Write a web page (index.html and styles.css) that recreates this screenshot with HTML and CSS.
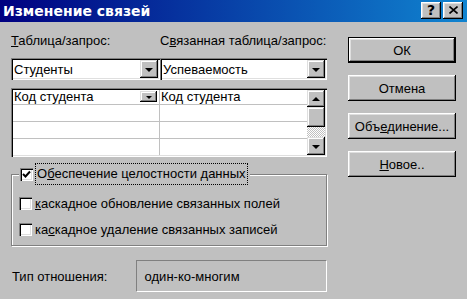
FILE: index.html
```html
<!DOCTYPE html>
<html lang="ru">
<head>
    <meta charset="UTF-8">
    <title>Изменение связей</title>
    <link rel="stylesheet" href="styles.css">
</head>
<body>
<div class="window">
    <div class="titlebar">
        <span class="title">Изменение связей</span>
        <div class="caption-btns">
            <div class="cap-btn help">?</div>
            <div class="cap-btn">
                <svg width="9" height="8" viewBox="0 0 9 8"><path d="M0.5 0.5 L8.5 7.5 M8.5 0.5 L0.5 7.5" stroke="#000" stroke-width="1.6"/></svg>
            </div>
        </div>
    </div>

    <div class="body">
        <div class="main">
            <div class="labels">
                <span><u>Т</u>аблица/запрос:</span>
                <span>С<u>в</u>язанная таблица/запрос:</span>
            </div>

            <div class="combos">
                <div class="combo">
                    <span class="combo-text">Студенты</span>
                    <div class="drop-btn"><i class="tri-down"></i></div>
                </div>
                <div class="combo">
                    <span class="combo-text">Успеваемость</span>
                    <div class="drop-btn"><i class="tri-down"></i></div>
                </div>
            </div>

            <div class="fields">
                <div class="rows">
                    <div class="row first">
                        <div class="cell">Код студента<div class="cell-btn"><i class="tri-down small"></i></div></div>
                        <div class="cell">Код студента</div>
                    </div>
                    <div class="row"><div class="cell"></div><div class="cell"></div></div>
                    <div class="row"><div class="cell"></div><div class="cell"></div></div>
                    <div class="row last"><div class="cell"></div><div class="cell"></div></div>
                </div>
                <div class="scrollbar">
                    <div class="sb-btn up"><i class="tri-up"></i></div>
                    <div class="sb-thumb"></div>
                    <div class="sb-track"></div>
                    <div class="sb-btn down"><i class="tri-down"></i></div>
                </div>
            </div>

            <div class="group">
                <div class="legend">
                    <span class="check"><svg width="9" height="9" viewBox="0 0 9 9"><path d="M1 4 L3.5 6.5 L8 1.5" fill="none" stroke="#000" stroke-width="2"/></svg></span>
                    <span class="focus">О<u>б</u>еспечение целостности данных</span>
                </div>
                <div class="option first">
                    <span class="check"></span>
                    <span><u>к</u>аскадное обновление связанных полей</span>
                </div>
                <div class="option">
                    <span class="check"></span>
                    <span>ка<u>с</u>кадное удаление связанных записей</span>
                </div>
            </div>

            <div class="reltype">
                <span class="reltype-label">Тип отношения:</span>
                <div class="reltype-box">один-ко-многим</div>
            </div>
        </div>

        <div class="side">
            <div class="btn default">ОК</div>
            <div class="btn">Отмена</div>
            <div class="btn">Объ<u>е</u>динение...</div>
            <div class="btn"><u>Н</u>овое..</div>
        </div>
    </div>
</div>
</body>
</html>
```

FILE: styles.css
```css
body {
    margin: 0;
    background: #c0c0c0;
    font-family: "Liberation Sans", Arial, sans-serif;
    font-size: 13px;
    color: #000;
}
.window {
    width: 467px;
    height: 299px;
    overflow: hidden;
}

/* title bar */
.titlebar {
    height: 22px;
    background: linear-gradient(to right, #000080, #1084d0);
    display: flex;
    align-items: center;
    justify-content: space-between;
    padding: 0 4px 0 3px;
}
.title {
    color: #fff;
    font: bold 14px "DejaVu Sans", sans-serif;
    margin-top: -1px;
}
.caption-btns {
    display: flex;
    gap: 2px;
    margin-top: -2px;
}
.cap-btn {
    width: 20px;
    height: 17px;
    background: #c0c0c0;
    box-shadow: inset -1px -1px #000, inset 1px 1px #fff, inset -2px -2px #808080, inset 2px 2px #dfdfdf;
    display: flex;
    align-items: center;
    justify-content: center;
}
.cap-btn.help {
    font: bold 14px "DejaVu Sans", sans-serif;
    line-height: 17px;
}

/* body */
.body {
    display: flex;
    padding-left: 11px;
}
.main {
    width: 316px;
}
.side {
    margin-left: 21px;
    padding-top: 15px;
    display: flex;
    flex-direction: column;
    gap: 12px;
}

.btn {
    width: 108px;
    height: 26px;
    box-sizing: border-box;
    background: #c0c0c0;
    box-shadow: inset -1px -1px #000, inset 1px 1px #fff, inset -2px -2px #808080, inset 2px 2px #dfdfdf;
    display: flex;
    align-items: center;
    justify-content: center;
}
.btn.default {
    border: 1px solid #000;
}

.labels {
    margin-top: 11px;
    height: 16px;
    line-height: 16px;
    display: grid;
    grid-template-columns: 149px 1fr;
}

/* combo boxes */
.combos {
    margin-top: 9px;
    display: grid;
    grid-template-columns: 149px 167px;
}
.combo {
    height: 22px;
    box-sizing: border-box;
    background: #fff;
    padding: 2px;
    box-shadow: inset 1px 1px #808080, inset 2px 2px #000, inset -1px -1px #fff, inset -2px -2px #dfdfdf;
    display: flex;
    align-items: center;
}
.combo-text {
    flex: 1;
    padding-left: 1px;
}
.drop-btn, .sb-btn, .cell-btn {
    background: #c0c0c0;
    box-shadow: inset -1px -1px #000, inset 1px 1px #dfdfdf, inset -2px -2px #808080, inset 2px 2px #fff;
    display: flex;
    align-items: center;
    justify-content: center;
}
.drop-btn {
    width: 18px;
    height: 18px;
}
.tri-down {
    width: 0;
    height: 0;
    border-left: 4px solid transparent;
    border-right: 4px solid transparent;
    border-top: 4px solid #000;
    margin-top: 1px;
}
.tri-down.small {
    border-left-width: 3px;
    border-right-width: 3px;
    border-top-width: 3px;
}
.tri-up {
    width: 0;
    height: 0;
    border-left: 4px solid transparent;
    border-right: 4px solid transparent;
    border-bottom: 4px solid #000;
}

/* field list */
.fields {
    margin-top: 8px;
    height: 69px;
    box-sizing: border-box;
    padding: 2px;
    background: #fff;
    box-shadow: inset 1px 1px #808080, inset 2px 2px #000, inset -1px -1px #fff, inset -2px -2px #dfdfdf;
    display: flex;
}
.rows {
    flex: 1;
}
.row {
    display: grid;
    grid-template-columns: 147px 1fr;
    height: 17px;
    border-bottom: 1px solid #c0c0c0;
    box-sizing: border-box;
}
.row.first {
    height: 15px;
}
.row.last {
    border-bottom: none;
    height: 16px;
}
.cell {
    border-right: 1px solid #c0c0c0;
    display: flex;
    align-items: center;
    justify-content: space-between;
    padding-left: 1px;
    line-height: 14px;
}
.cell:last-child {
    border-right: none;
}
.cell-btn {
    width: 17px;
    height: 11px;
    margin: 0 2px 1px 0;
}

.scrollbar {
    width: 18px;
    display: flex;
    flex-direction: column;
}
.sb-btn.up {
    height: 17px;
}
.sb-btn.down {
    height: 18px;
}
.sb-thumb {
    height: 20px;
    background: #c0c0c0;
    box-shadow: inset -1px -1px #000, inset 1px 1px #dfdfdf, inset -2px -2px #808080, inset 2px 2px #fff;
}
.sb-track {
    height: 10px;
    background: repeating-conic-gradient(#fff 0 25%, #c0c0c0 0 50%) 0 0 / 2px 2px;
}

/* group box */
.group {
    margin-top: 17px;
    height: 72px;
    box-sizing: border-box;
    border: 1px solid #808080;
    box-shadow: inset 1px 1px #fff, 1px 1px #fff;
    padding: 0 0 0 7px;
}
.legend {
    display: flex;
    width: fit-content;
    align-items: center;
    gap: 3px;
    margin-top: -11px;
    background: #c0c0c0;
    padding: 0 3px 0 1px;
}
.focus {
    outline: 1px dotted #000;
    padding: 2px 1px;
    line-height: 16px;
}
.option {
    display: flex;
    align-items: center;
    gap: 3px;
    margin-top: 5px;
    height: 21px;
}
.option.first {
    margin-top: 9px;
}
.check {
    width: 13px;
    height: 13px;
    box-sizing: border-box;
    background: #fff;
    box-shadow: inset 1px 1px #808080, inset 2px 2px #000, inset -1px -1px #fff, inset -2px -2px #dfdfdf;
    display: flex;
    align-items: center;
    justify-content: center;
}

/* relationship type */
.reltype {
    margin-top: 14px;
    display: flex;
    align-items: center;
}
.reltype-label {
    width: 124px;
    padding-left: 1px;
}
.reltype-box {
    width: 192px;
    height: 32px;
    box-sizing: border-box;
    border: 1px solid #808080;
    border-right-color: #fff;
    border-bottom-color: #fff;
    display: flex;
    align-items: center;
    padding-left: 8px;
}
```
